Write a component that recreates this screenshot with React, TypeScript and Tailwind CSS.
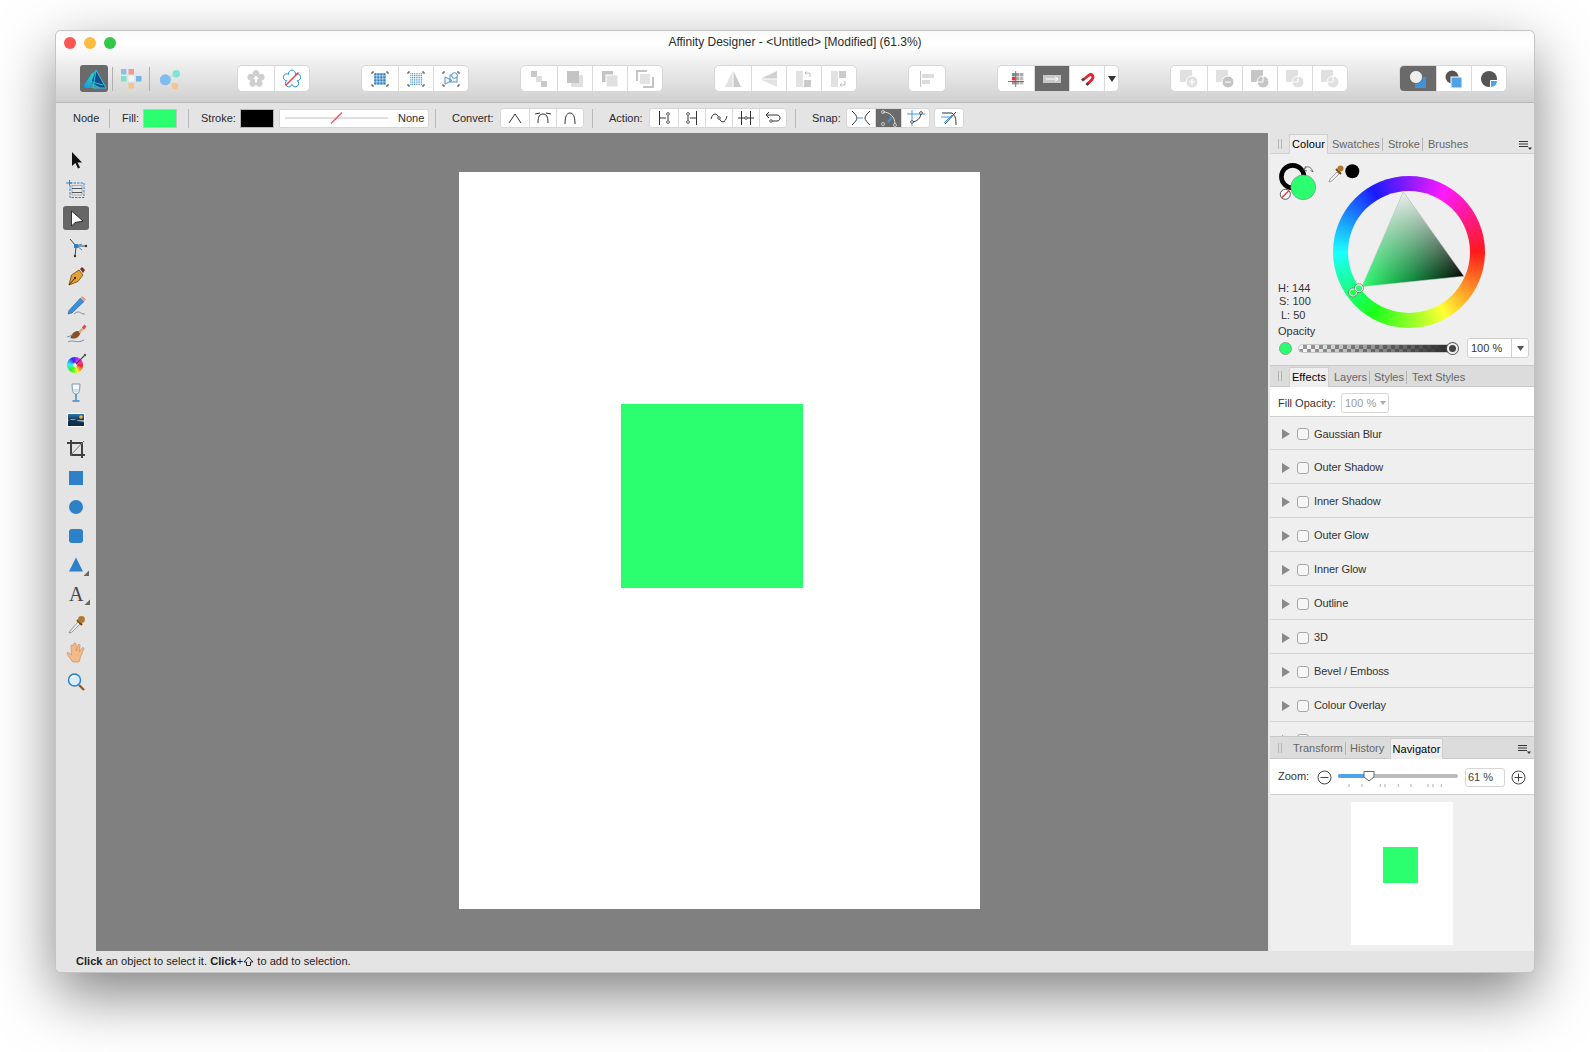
import React from "react";

const font = "font-['Liberation_Sans',Arial,sans-serif]";
const G = "#2bff70";

function flower(cx: number, cy: number, r: number, lobe: number) {
  const pts = [0, 1, 2, 3, 4].map((k) => {
    const a = ((-90 + 36 + 72 * k) * Math.PI) / 180;
    return [cx + r * Math.cos(a), cy + r * Math.sin(a)];
  });
  let d = `M${pts[4][0].toFixed(2)} ${pts[4][1].toFixed(2)}`;
  pts.forEach((p) => {
    d += ` A${lobe} ${lobe} 0 1 1 ${p[0].toFixed(2)} ${p[1].toFixed(2)}`;
  });
  return d + "Z";
}

function Svg({ w = 22, h = 22, children }: { w?: number; h?: number; children?: React.ReactNode }) {
  return (
    <svg width={w} height={h} viewBox={`0 0 ${w} ${h}`} className="block shrink-0" fill="none">
      {children}
    </svg>
  );
}

function Cell({ w, dark, children }: { w: string; dark?: boolean; children?: React.ReactNode }) {
  return (
    <div className={`${w} ${dark ? "bg-[#6a6a6a]" : ""} flex items-center justify-center border-l border-[#dadada] first:border-l-0`}>
      {children}
    </div>
  );
}

function Group({ ml, small, children }: { ml: string; small?: boolean; children?: React.ReactNode }) {
  return (
    <div className={`${ml} ${small ? "h-[20px] rounded-[3px]" : "h-[27px] rounded-[5px]"} flex overflow-hidden border border-[#d6d6d6] bg-white`}>
      {children}
    </div>
  );
}

function Corners({ c = "#444" }: { c?: string }) {
  return (
    <path d="M2 4V2H4M16 2H18V4M18 14V16H16M4 16H2V14" stroke={c} strokeWidth="1" />
  );
}

function Dots({ step, size, x0, n }: { step: number; size: number; x0: number; n: number }) {
  const a = Array.from({ length: n }, (_, i) => i);
  return (
    <>
      {a.flatMap((i) =>
        a.map((j) => (
          <rect key={`${i}-${j}`} x={x0 + i * step} y={x0 - 1 + j * step} width={size} height={size} fill="#2a7fc4" />
        ))
      )}
    </>
  );
}

function Boolean1({ kind }: { kind: number }) {
  return (
    <Svg w={20} h={20}>
      <rect x="1" y="1" width="12" height="12" fill={kind === 2 ? "#c6c6c6" : "#e0e0e0"} />
      <circle cx="13" cy="13" r="6" fill={kind === 1 ? "#c4c4c4" : kind === 2 ? "#c6c6c6" : "#e0e0e0"} stroke="#fff" strokeWidth="1" />
      {kind === 0 && <path d="M10 13h6M13 10v6" stroke="#fff" strokeWidth="1.2" />}
      {kind === 1 && <path d="M10 13h6" stroke="#fff" strokeWidth="1.2" />}
      {kind >= 2 && <path d="M13 7v6H7" stroke="#fff" strokeWidth="1" />}
    </Svg>
  );
}

function Toolbar() {
  return (
    <div className="flex items-center">
      <div className="ml-[24px] flex h-[27px] w-[28px] items-center justify-center rounded-[3px] bg-[#6a6a6a]">
        <Svg w={26} h={26}>
          <defs>
            <linearGradient id="lg" x1="3" y1="22" x2="24" y2="6" gradientUnits="userSpaceOnUse">
              <stop offset="0" stopColor="#1b8fe8" />
              <stop offset="0.55" stopColor="#2fd1c0" />
              <stop offset="1" stopColor="#1c5fa8" />
            </linearGradient>
          </defs>
          <path d="M15 4L25 22H5C2.5 22 1.7 20 3 18.5L11 7Z" fill="#134b86" />
          <path d="M11 7L15 4L8 22H5C2.5 22 1.7 20 3 18.5Z" fill="url(#lg)" />
          <path d="M15 4L25 22H12Z M8 15L22 19" stroke="#27c6ef" strokeWidth="1" />
          <path d="M10 16L20 22H8Z" fill="#39c7b8" opacity=".7" />
        </Svg>
      </div>
      <div className="ml-[4px] h-[24px] w-px bg-[#b0b0b0]" />
      <div className="ml-[5px] flex w-[26px] justify-center">
        <Svg w={24} h={24}>
          <rect x="2" y="2" width="5.5" height="5.5" fill="#8fbfe2" />
          <rect x="9.5" y="2" width="5.5" height="5.5" fill="#ec9a92" />
          <rect x="2" y="9" width="5.5" height="5.5" fill="#7ddfd0" />
          <rect x="9.5" y="9" width="5.5" height="5.5" fill="#f4f4f4" />
          <rect x="17" y="9" width="5.5" height="5.5" fill="#6fb4ea" />
          <rect x="9.5" y="16" width="5.5" height="5.5" fill="#f6c488" />
        </Svg>
      </div>
      <div className="ml-[5px] h-[24px] w-px bg-[#b0b0b0]" />
      <div className="ml-[6px] flex w-[26px] justify-center">
        <Svg w={24} h={24}>
          <path d="M8 13L19 7M8 13L18 19" stroke="#cdd" strokeWidth="1.5" />
          <circle cx="8.3" cy="12.8" r="5.5" fill="#7dbdf0" />
          <circle cx="19.3" cy="6.8" r="3.7" fill="#7de6d2" />
          <circle cx="18" cy="19.2" r="3.3" fill="#f6c28e" />
        </Svg>
      </div>

      <Group ml="ml-[55px]">
        <Cell w="w-[36px]">
          <Svg w={20} h={20}>
            <path d={flower(10, 10, 5.5, 3.4)} fill="#cfcfcf" />
            <path d="M10 6.5L13 10H11V13.5H9V10H7Z" fill="#fff" />
          </Svg>
        </Cell>
        <Cell w="w-[35px]">
          <Svg w={20} h={20}>
            <path d={flower(10, 10, 5.5, 3.4)} fill="#fff" stroke="#2a8bd6" strokeWidth="1" />
            <path d="M3.5 16.5L16.5 3.5" stroke="#e8414f" strokeWidth="1.4" />
          </Svg>
        </Cell>
      </Group>

      <Group ml="ml-[51px]">
        <Cell w="w-[36px]">
          <Svg w={20} h={18}>
            <Corners />
            <Dots step={3} size={2.4} x0={4.2} n={4} />
          </Svg>
        </Cell>
        <Cell w="w-[35px]">
          <Svg w={20} h={18}>
            <Corners />
            <Dots step={1.8} size={1} x0={4.3} n={7} />
          </Svg>
        </Cell>
        <Cell w="w-[35px]">
          <Svg w={20} h={18}>
            <Corners />
            <rect x="9" y="5" width="7" height="7" stroke="#4a90cc" />
            <circle cx="13.5" cy="5.5" r="2.8" stroke="#4a90cc" fill="#fff" />
            <path d="M4 7V14L11 10.5Z" stroke="#4a90cc" />
          </Svg>
        </Cell>
      </Group>

      <Group ml="ml-[51px]">
        <Cell w="w-[36px]">
          <Svg w={18} h={18}>
            <rect x="1" y="1" width="6" height="6" fill="#c8c8c8" />
            <rect x="6" y="6" width="6" height="6" fill="#dedede" />
            <rect x="11" y="11" width="6" height="6" fill="#c8c8c8" />
          </Svg>
        </Cell>
        <Cell w="w-[35px]">
          <Svg w={18} h={18}>
            <rect x="5" y="5" width="12" height="12" fill="#e0e0e0" />
            <rect x="1" y="1" width="12" height="12" fill="#c4c4c4" />
          </Svg>
        </Cell>
        <Cell w="w-[35px]">
          <Svg w={18} h={18}>
            <rect x="1" y="1" width="11" height="11" fill="#c4c4c4" />
            <rect x="5" y="5" width="12" height="12" fill="#e0e0e0" stroke="#fff" />
          </Svg>
        </Cell>
        <Cell w="w-[35px]">
          <Svg w={18} h={18}>
            <path d="M1 11V1H11" stroke="#c4c4c4" strokeWidth="2" />
            <rect x="4" y="4" width="10" height="10" fill="#e4e4e4" />
            <path d="M7 17H17V7" stroke="#c4c4c4" strokeWidth="2" />
          </Svg>
        </Cell>
      </Group>

      <Group ml="ml-[51px]">
        <Cell w="w-[36px]">
          <Svg w={20} h={20}>
            <path d="M9.5 2V18H2Z" fill="#e2e2e2" />
            <path d="M10.5 2V18H18Z" fill="#cacaca" />
          </Svg>
        </Cell>
        <Cell w="w-[35px]">
          <Svg w={20} h={20}>
            <path d="M18 2V9.5H2Z" fill="#d0d0d0" />
            <path d="M18 18V10.5H2Z" fill="#e2e2e2" />
          </Svg>
        </Cell>
        <Cell w="w-[35px]">
          <Svg w={20} h={20}>
            <rect x="2" y="2" width="7" height="16" fill="#e2e2e2" />
            <rect x="10" y="11" width="7" height="7" fill="#cacaca" />
            <path d="M16 8V4H11M12.5 2.5L11 4L12.5 5.5" stroke="#bbb" />
          </Svg>
        </Cell>
        <Cell w="w-[35px]">
          <Svg w={20} h={20}>
            <rect x="2" y="2" width="7" height="16" fill="#e2e2e2" />
            <rect x="10" y="2" width="7" height="7" fill="#cacaca" />
            <path d="M16 12V16H11M12.5 14.5L11 16L12.5 17.5" stroke="#bbb" />
          </Svg>
        </Cell>
      </Group>

      <Group ml="ml-[51px]">
        <Cell w="w-[36px]">
          <Svg w={20} h={20}>
            <path d="M3.5 2V18" stroke="#c4c4c4" />
            <rect x="5" y="5" width="12" height="4" fill="#dcdcdc" />
            <rect x="5" y="11" width="8" height="4" fill="#dcdcdc" />
          </Svg>
        </Cell>
      </Group>

      <Group ml="ml-[51px]">
        <Cell w="w-[36px]">
          <Svg w={18} h={18}>
            <rect x="5" y="3" width="3.4" height="3.4" fill="#8a8a8a" />
            <rect x="9" y="3" width="3.4" height="3.4" fill="#9a9a9a" />
            <rect x="13" y="3" width="3.4" height="3.4" fill="#aaa" />
            <rect x="5" y="7" width="3.4" height="3.4" fill="#ea2f2f" />
            <rect x="9" y="7" width="3.4" height="3.4" fill="#aaa" />
            <rect x="13" y="7" width="3.4" height="3.4" fill="#bbb" />
            <rect x="5" y="11" width="3.4" height="3.4" fill="#9a9a9a" />
            <rect x="9" y="11" width="3.4" height="3.4" fill="#aaa" />
            <rect x="13" y="11" width="3.4" height="3.4" fill="#bbb" />
            <path d="M1 11.5H17M8.7 1V17" stroke="#555" strokeWidth=".8" />
          </Svg>
        </Cell>
        <Cell w="w-[35px]" dark>
          <Svg w={20} h={16}>
            <rect x="1" y="4" width="18" height="8" fill="#c9c9c9" />
            <path d="M4 8H16M13 5.5L16 8L13 10.5" stroke="#fff" />
          </Svg>
        </Cell>
        <Cell w="w-[35px]">
          <Svg w={20} h={20}>
            <path d="M6.5 10.5L11.5 6.5C14.5 4 17.5 7 15 10.5L10.5 15" stroke="#e4262c" strokeWidth="2.8" />
            <path d="M5 11.5L7 9.8M9.5 16L11.3 14" stroke="#444" strokeWidth="2.8" />
          </Svg>
        </Cell>
        <Cell w="w-[14px]">
          <Svg w={8} h={6}>
            <path d="M0 0H8L4 6Z" fill="#333" />
          </Svg>
        </Cell>
      </Group>

      <Group ml="ml-[51px]">
        <Cell w="w-[36px]"><Boolean1 kind={0} /></Cell>
        <Cell w="w-[35px]"><Boolean1 kind={1} /></Cell>
        <Cell w="w-[35px]"><Boolean1 kind={2} /></Cell>
        <Cell w="w-[35px]"><Boolean1 kind={3} /></Cell>
        <Cell w="w-[35px]"><Boolean1 kind={4} /></Cell>
      </Group>

      <Group ml="ml-[51px]">
        <Cell w="w-[36px]" dark>
          <Svg w={20} h={20}>
            <rect x="7" y="8" width="11" height="11" fill="#3f93d9" />
            <circle cx="8" cy="8" r="6.5" fill="#eee" stroke="#444" strokeWidth=".6" />
          </Svg>
        </Cell>
        <Cell w="w-[35px]">
          <Svg w={20} h={20}>
            <circle cx="8" cy="8" r="6.5" fill="#555" />
            <rect x="7" y="8" width="11" height="11" fill="#4ea3e6" stroke="#fff" />
          </Svg>
        </Cell>
        <Cell w="w-[35px]">
          <Svg w={20} h={20}>
            <circle cx="10" cy="10" r="8" fill="#555" />
            <path d="M11.5 18.5V11.5H18.5C18.5 15.5 15.5 18.5 11.5 18.5Z" fill="#4ea3e6" stroke="#fff" />
          </Svg>
        </Cell>
      </Group>
    </div>
  );
}

function Lbl({ cls, children }: { cls: string; children: React.ReactNode }) {
  return <div className={`${cls} shrink-0 whitespace-nowrap text-[11px] leading-none text-[#2a2a2a]`}>{children}</div>;
}

function Sep({ ml }: { ml?: string }) {
  return <div className={`${ml ?? ""} h-[19px] w-px shrink-0 bg-[#b8b8b8]`} />;
}

function ContextBar() {
  const s = "#333";
  return (
    <div className="flex h-[30px] shrink-0 items-center bg-[#e4e4e4]">
      <Lbl cls="ml-[17px] w-[36px]">Node</Lbl>
      <Sep />
      <Lbl cls="ml-[12px] w-[21px]">Fill:</Lbl>
      <div className="h-[19px] w-[34px] border border-[#c4c4c4] bg-[#2bff70]" />
      <Sep ml="ml-[11px]" />
      <Lbl cls="ml-[12px] w-[39px]">Stroke:</Lbl>
      <div className="h-[19px] w-[34px] border border-[#b4b4b4] bg-black" />
      <div className="ml-[5px] flex h-[19px] w-[150px] items-center rounded-[2px] border border-[#d6d6d6] bg-white pl-[5px]">
        <Svg w={104} h={14}>
          <path d="M0 7H103" stroke="#d4d4d4" strokeWidth="1.5" />
          <path d="M46 12.5L57 1.5" stroke="#f0566a" strokeWidth="1.4" />
        </Svg>
        <span className="ml-[9px] text-[11px] leading-none text-[#2a2a2a]">None</span>
      </div>
      <Sep ml="ml-[6px]" />
      <Lbl cls="ml-[16px] w-[48px]">Convert:</Lbl>
      <Group ml="" small>
        <Cell w="w-[28px]">
          <Svg w={16} h={14}><path d="M2 12L8 3L14 12" stroke={s} /></Svg>
        </Cell>
        <Cell w="w-[27px]">
          <Svg w={16} h={14}>
            <path d="M3 12C3 5 5 3 8 3C11 3 13 5 13 12" stroke={s} />
            <path d="M0 3L5 2M11 2L16 3" stroke={s} />
          </Svg>
        </Cell>
        <Cell w="w-[27px]">
          <Svg w={16} h={14}><path d="M3 13C3 5 5 2 8 2C11 2 13 5 13 13" stroke={s} /></Svg>
        </Cell>
      </Group>
      <Sep ml="ml-[8px]" />
      <Lbl cls="ml-[16px] w-[40px]">Action:</Lbl>
      <Group ml="" small>
        <Cell w="w-[28px]">
          <Svg w={18} h={16}>
            <path d="M4.5 1V15M5 8H11" stroke={s} />
            <circle cx="13" cy="4" r="1.4" stroke={s} strokeWidth=".8" />
            <circle cx="13" cy="12" r="1.4" stroke={s} strokeWidth=".8" />
            <path d="M13 6V10" stroke={s} />
          </Svg>
        </Cell>
        <Cell w="w-[27px]">
          <Svg w={18} h={16}>
            <path d="M13.5 1V15M13 8H7" stroke={s} />
            <circle cx="5" cy="4" r="1.4" stroke={s} strokeWidth=".8" />
            <circle cx="5" cy="12" r="1.4" stroke={s} strokeWidth=".8" />
            <path d="M5 6V10" stroke={s} />
          </Svg>
        </Cell>
        <Cell w="w-[27px]">
          <Svg w={18} h={16}>
            <path d="M1 9C3 2 7 3 9 8C11 13 15 14 17 6" stroke={s} />
            <circle cx="9" cy="8" r="1.3" fill="#fff" stroke={s} strokeWidth=".8" />
          </Svg>
        </Cell>
        <Cell w="w-[27px]">
          <Svg w={18} h={16}>
            <path d="M4.5 1V15M13.5 1V15M1 8H17" stroke={s} />
            <circle cx="9" cy="8" r="1.3" fill="#fff" stroke={s} strokeWidth=".8" />
          </Svg>
        </Cell>
        <Cell w="w-[27px]">
          <Svg w={18} h={16}>
            <path d="M2 5H13C17 5 17 11 13 11H8" stroke={s} />
            <path d="M5 2L2 5L5 8" stroke={s} />
            <circle cx="7" cy="11" r="1.3" fill="#fff" stroke={s} strokeWidth=".8" />
          </Svg>
        </Cell>
      </Group>
      <Sep ml="ml-[8px]" />
      <Lbl cls="ml-[16px] w-[34px]">Snap:</Lbl>
      <Group ml="" small>
        <Cell w="w-[28px]">
          <Svg w={22} h={16}>
            <path d="M2 1C5 4 7 6 7 8C7 10 5 12 2 15M20 1C17 4 15 6 15 8C15 10 17 12 20 15" stroke={s} />
            <path d="M8 8H13" stroke="#3f9be0" />
          </Svg>
        </Cell>
        <Cell w="w-[26px]" dark>
          <Svg w={20} h={18}>
            <path d="M4 3C11 3 16 8 16 15" stroke="#ddd" />
            <circle cx="4" cy="3" r="1.5" stroke="#ddd" strokeWidth=".8" />
            <circle cx="16" cy="16" r="1.5" stroke="#ddd" strokeWidth=".8" />
            <circle cx="4" cy="15" r="1.5" stroke="#ddd" strokeWidth=".8" />
            <path d="M9 13L13 8" stroke="#3f9be0" strokeWidth="2" />
          </Svg>
        </Cell>
        <Cell w="w-[28px]">
          <Svg w={20} h={18}>
            <path d="M6 1V17M1 5H19" stroke="#3f9be0" />
            <path d="M5 13C11 13 15 9 15 4" stroke={s} />
            <circle cx="6" cy="13" r="1.4" fill="#fff" stroke={s} strokeWidth=".8" />
            <circle cx="15" cy="4" r="1.4" fill="#fff" stroke={s} strokeWidth=".8" />
          </Svg>
        </Cell>
      </Group>
      <Group ml="ml-[4px]" small>
        <Cell w="w-[28px]">
          <Svg w={20} h={18}>
            <path d="M3 4H13C17 7 17 11 17 16" stroke={s} />
            <path d="M6 15L17 3" stroke={s} />
            <path d="M2 8L13 8M5 14L13 6" stroke="#3f9be0" />
          </Svg>
        </Cell>
      </Group>
    </div>
  );
}

function wheelSectors(cx: number, cy: number, r: number) {
  return Array.from({ length: 24 }, (_, i) => {
    const a0 = (i * 15 * Math.PI) / 180;
    const a1 = ((i + 1.2) * 15 * Math.PI) / 180;
    return {
      d: `M${cx} ${cy}L${(cx + r * Math.cos(a0)).toFixed(2)} ${(cy + r * Math.sin(a0)).toFixed(2)}A${r} ${r} 0 0 1 ${(cx + r * Math.cos(a1)).toFixed(2)} ${(cy + r * Math.sin(a1)).toFixed(2)}Z`,
      c: `hsl(${i * 15} 90% 55%)`,
    };
  });
}

const MiniTri = () => <path d="M21.5 23H27V17.5Z" fill="#666" />;

const toolIcons: React.ReactNode[] = [
  <Svg w={28} h={24} key="0"><path d="M10 4V18L13.4 15L16 20.5L18 19.5L15.5 14.5H20Z" fill="#111" /></Svg>,
  <Svg w={28} h={24} key="1">
    <rect x="8" y="6" width="14" height="14.5" stroke="#2a86d0" strokeDasharray="2.5 1" />
    <path d="M4 6H10M7.5 3V8" stroke="#2a86d0" />
    <rect x="10" y="8.5" width="10" height="9.5" fill="#e8e8e8" stroke="#888" strokeWidth=".6" />
    <path d="M10 11.5H20M10 15.5H20" stroke="#555" />
  </Svg>,
  <Svg w={28} h={24} key="2"><path d="M9.5 5V20L13 16.5L21 15Z" fill="#fff" stroke="#111" strokeWidth=".8" /></Svg>,
  <Svg w={28} h={24} key="3">
    <path d="M15 11H24M8 4L14 11M14 12L13 21" stroke="#444" />
    <path d="M15 11L20 15M14 11L20 9" stroke="#3a8fd4" />
    <rect x="12" y="9" width="4" height="4" fill="#2f7fc4" />
    <circle cx="24" cy="11" r="1.2" fill="#333" /><circle cx="13" cy="21" r="1.2" fill="#333" />
  </Svg>,
  <Svg w={28} h={24} key="4">
    <path d="M7 21L9.5 11L17 6L21 11L16 17.5Z" fill="#e6a133" stroke="#6b4510" strokeWidth=".8" />
    <path d="M7 21L13 14" stroke="#4a2d08" />
    <circle cx="13" cy="14" r="1.2" fill="#4a2d08" />
    <path d="M18 5L20 3L23 6L21 9Z" fill="#7c2b22" />
  </Svg>,
  <Svg w={28} h={24} key="5">
    <path d="M7 17.5L18.5 5L22 8.5L10 20L6 21Z" fill="#3a8fdc" stroke="#1f5d9a" strokeWidth=".6" />
    <path d="M18.5 5L20.5 3L24 6.5L22 8.5Z" fill="#f09a96" />
    <path d="M12 21C15 18 18 19 19 20C20 21 22 21 23 21" stroke="#777" strokeWidth=".8" />
  </Svg>,
  <Svg w={28} h={24} key="6">
    <path d="M8.5 16C9.5 10 15 8 18.5 9.5C18.5 14.5 13.5 18 8.5 16Z" fill="#8a4f22" />
    <path d="M17 10.5L22 5.5" stroke="#d9a87a" strokeWidth="2.4" />
    <path d="M21 6.5L23.5 3.5" stroke="#e04a55" strokeWidth="2.8" />
    <path d="M5 15L11 13M6 20C11 17 15 22 22 18" stroke="#4f8fc4" strokeWidth=".9" />
  </Svg>,
  <Svg w={28} h={24} key="7">
    {wheelSectors(13, 14, 8).map((p, i) => <path key={i} d={p.d} fill={p.c} />)}
    <circle cx="13" cy="14" r="2" fill="#eee" />
    <path d="M14 13L23 4" stroke="#444" strokeWidth="1.1" />
    <circle cx="23" cy="4" r="1.2" fill="#555" />
  </Svg>,
  <Svg w={28} h={24} key="8">
    <path d="M10 4H18L17.6 10C17.4 13 15.5 14 14 14C12.5 14 10.6 13 10.4 10Z" fill="#f4f8fb" stroke="#7d98ad" />
    <path d="M14 14V20M10.5 21H17.5" stroke="#3b86c4" strokeWidth="1.4" />
    <rect x="10.8" y="9" width="6.4" height="3" fill="#cfdfe9" />
  </Svg>,
  <Svg w={28} h={24} key="9">
    <defs>
      <linearGradient id="ph" x1="0" y1="0" x2="0" y2="1">
        <stop offset="0" stopColor="#2f7fb8" />
        <stop offset=".5" stopColor="#15344f" />
        <stop offset="1" stopColor="#0e2a45" />
      </linearGradient>
    </defs>
    <rect x="5.5" y="5.5" width="17" height="13" fill="url(#ph)" stroke="#fff" />
    <circle cx="19" cy="9" r="1.8" fill="#efb33e" />
    <path d="M6 13C10 10 13 11 16 13L22 14V12H6Z" fill="#cfe4f2" opacity=".7" />
  </Svg>,
  <Svg w={28} h={24} key="10">
    <path d="M9 3V18H23M5 6H20V21" stroke="#3f3f3f" strokeWidth="2" />
    <path d="M8 19L22 4" stroke="#777" />
  </Svg>,
  <Svg w={28} h={24} key="11"><rect x="7" y="5" width="14" height="14" fill="#2e80c8" /></Svg>,
  <Svg w={28} h={24} key="12"><circle cx="14" cy="12" r="7" fill="#2e80c8" /></Svg>,
  <Svg w={28} h={24} key="13"><rect x="7" y="5" width="14" height="14" rx="3" fill="#2e80c8" /></Svg>,
  <Svg w={28} h={24} key="14"><path d="M14 4.5L21 18.5H7Z" fill="#2e80c8" /><MiniTri /></Svg>,
  <div className="relative h-[24px] w-[28px]" key="15">
    <span className="absolute left-[6px] top-[1px] font-['Liberation_Serif',serif] text-[20px] leading-[22px] text-[#444]">A</span>
    <div className="absolute left-0 top-0"><Svg w={28} h={24}><MiniTri /></Svg></div>
  </div>,
  <Svg w={28} h={24} key="16">
    <path d="M8 20L16 11L18 13L10 21L7 22Z" fill="#eee" stroke="#777" strokeWidth=".7" />
    <path d="M15 9L20 14" stroke="#6a4310" strokeWidth="2" />
    <circle cx="19.5" cy="8.5" r="3.4" fill="#b07a2c" />
  </Svg>,
  <Svg w={28} h={24} key="17">
    <path d="M10 21C8 18 5 15 5 13C6 12 8 13 9.5 15L9 6C9 4.5 11 4.5 11 6L11.8 4C12 2.5 14 2.5 14 4L14.5 11L16 5C16.5 3.5 18 4 18 5.5L17.3 12L20 8C21 7 22.3 8 21.7 9.3L18.5 17C18 19 17.5 21 17 22H11Z" fill="#f4b98a" stroke="#c98552" strokeWidth=".6" />
  </Svg>,
  <Svg w={28} h={24} key="18">
    <path d="M17 16L22 21" stroke="#9a5a24" strokeWidth="2.4" />
    <circle cx="12.5" cy="11" r="6" fill="#d9eefc" stroke="#2b7fc6" strokeWidth="1.4" />
    <path d="M9 9C10 7.5 12 7 13 7" stroke="#fff" strokeWidth="1.4" />
  </Svg>,
];

function Tools() {
  return (
    <div className="flex w-[40px] shrink-0 flex-col items-center bg-[#e4e4e4] pt-[15px]">
      {toolIcons.map((ic, i) => (
        <div key={i} className={`flex h-[24px] w-[26px] items-center justify-center rounded-[3px] ${i === 0 ? "" : "mt-[4.95px]"} ${i === 2 ? "bg-[#666666]" : ""}`}>
          {ic}
        </div>
      ))}
    </div>
  );
}

function Grip() {
  return <div className="ml-[8px] h-[10px] w-[4px] shrink-0 border-x border-[#b4b4b4]" />;
}

function Burger() {
  return (
    <Svg w={13} h={10}>
      <path d="M0 1.5H9M0 4H9M0 6.5H9" stroke="#333" />
      <path d="M9 7.5H13L11 10Z" fill="#333" />
    </Svg>
  );
}

function Tab({ children, cls }: { children: React.ReactNode; cls: string }) {
  return (
    <div className={`${cls} flex items-center justify-center self-end border-x border-t border-[#cfcfcf] bg-[#efefef] text-[11px] leading-none tracking-[0.1px] text-black`}>
      {children}
    </div>
  );
}

function TabText({ cls, sep, children }: { cls: string; sep?: boolean; children: React.ReactNode }) {
  return (
    <div className={`${cls} ${sep ? "border-r border-[#b4b4b4]" : ""} flex h-[13px] items-center text-[11px] leading-none text-[#666] whitespace-nowrap`}>
      {children}
    </div>
  );
}

function ColourPanel() {
  return (
    <div className="h-[211px] bg-[#efefef]">
      <div className="flex h-[171px]">
        <div className="relative w-[63px] shrink-0">
          <div className="absolute left-[8px] top-[5px]">
            <Svg w={92} h={52}>
              <circle cx="14.7" cy="17.7" r="11.3" stroke="#000" strokeWidth="4.6" />
              <circle cx="25.3" cy="28.3" r="12.4" fill={G} stroke="#8a8a8a" strokeWidth=".7" />
              <circle cx="7.3" cy="35.3" r="5" fill="#fff" stroke="#333" strokeWidth=".8" />
              <path d="M3.5 39L11 31.5" stroke="#ea2f3a" strokeWidth="1.2" />
              <path d="M26 11C28.5 6 33 7 35 13M28 7L25.7 10.8L29 12M35.3 13L32.5 11.3" stroke="#555" strokeWidth=".8" />
              <path d="M52 20L59 13L61 15L54 22L51 23Z" fill="#eee" stroke="#777" strokeWidth=".6" />
              <path d="M58 10L63 15" stroke="#6a4310" strokeWidth="1.8" />
              <circle cx="62.5" cy="9.5" r="3" fill="#b07a2c" />
              <circle cx="74.3" cy="12.3" r="7" fill="#000" />
            </Svg>
          </div>
          <div className="pl-[8px] pt-[128px] text-[11px] leading-[13.3px] text-[#333]">
            <div>H: 144</div>
            <div className="pl-px">S: 100</div>
            <div className="pl-[3px]">L: 50</div>
          </div>
        </div>
        <div className="relative mt-[22px] flex h-[152px] w-[152px] items-center justify-center rounded-full bg-[conic-gradient(from_90deg,#ff1a1a,#ffff33,#1aff1a,#1affff,#1a1aff,#ff1aff,#ff1a1a)]">
          <div className="h-[122px] w-[122px] rounded-full bg-[#efefef]" />
          <div className="absolute inset-0">
            <svg width="152" height="152" viewBox="0 0 152 152" className="block">
              <defs>
                <linearGradient id="tb" x1="28.7" y1="110.8" x2="131" y2="100.2" gradientUnits="userSpaceOnUse">
                  <stop offset="0" stopColor="#2bff70" />
                  <stop offset="0.5" stopColor="#0f8a3c" />
                  <stop offset="1" stopColor="#050505" />
                </linearGradient>
                <linearGradient id="tw" x1="70.3" y1="15.8" x2="80" y2="105.5" gradientUnits="userSpaceOnUse">
                  <stop offset="0" stopColor="#eeeeee" stopOpacity="1" />
                  <stop offset="1" stopColor="#eeeeee" stopOpacity="0" />
                </linearGradient>
              </defs>
              <path d="M70.3 15.8L131 100.2L28.7 110.8Z" fill="url(#tb)" />
              <path d="M70.3 15.8L131 100.2L28.7 110.8Z" fill="url(#tw)" stroke="#cfcfcf" strokeWidth=".5" />
              <circle cx="20" cy="116.5" r="4.4" fill="#fff" stroke="#333" strokeWidth=".5" />
              <circle cx="20" cy="116.5" r="3" fill="#2bff4a" />
              <circle cx="26" cy="112.2" r="4.4" fill="#fff" stroke="#333" strokeWidth=".5" />
              <circle cx="26" cy="112.2" r="3" fill="#2bff70" />
            </svg>
          </div>
        </div>
      </div>
      <div className="h-[13px] pl-[8px] text-[11px] leading-[13px] text-[#333]">Opacity</div>
      <div className="flex h-[20px] items-center">
        <div className="ml-[9px] h-[13px] w-[13px] rounded-full border border-[#9a9a9a] bg-[#2bff70]" />
        <div className="relative ml-[6px] flex h-[9px] w-[160px] rounded-full border border-[#c4c4c4] [background:linear-gradient(90deg,rgba(0,0,0,0),#333_92%),repeating-conic-gradient(#9c9c9c_0_25%,#fff_0_50%)_0_0/8px_8px]">
          <div className="absolute right-[-1px] top-[-2px] h-[11px] w-[11px] rounded-full border-[2px] border-[#f2f2f2] bg-[#444] shadow-[0_0_0_1px_#555]" />
        </div>
        <div className="ml-[9px] flex h-[20px] w-[62px] rounded-[3px] border border-[#d0d0d0] bg-white text-[11px] leading-none text-[#333]">
          <div className="flex w-[44px] items-center border-r border-[#d0d0d0] pl-[3px]">100 %</div>
          <div className="flex flex-1 items-center justify-center">
            <Svg w={7} h={5}><path d="M0 0H7L3.5 5Z" fill="#555" /></Svg>
          </div>
        </div>
      </div>
    </div>
  );
}

const effects = ["Gaussian Blur", "Outer Shadow", "Inner Shadow", "Outer Glow", "Inner Glow", "Outline", "3D", "Bevel / Emboss", "Colour Overlay", ""];

function Effects() {
  return (
    <div className="flex h-[371px] flex-col">
      <div className="flex h-[22px] shrink-0 items-center bg-[#dcdcdc] shadow-[inset_0_1px_0_#c8c8c8,inset_0_-1px_0_#c8c8c8]">
        <Grip />
        <Tab cls="ml-[7px] h-[20px] w-[40px]">Effects</Tab>
        <TabText cls="ml-[5px] mt-[2px] w-[36px]" sep>Layers</TabText>
        <TabText cls="ml-[4px] mt-[2px] w-[33px]" sep>Styles</TabText>
        <TabText cls="ml-[5px] mt-[2px] w-[60px]">Text Styles</TabText>
      </div>
      <div className="flex h-[30px] shrink-0 items-center border-b border-[#cfcfcf] bg-white pt-[3px]">
        <div className="ml-[8px] mt-px w-[63px] text-[11px] leading-none text-[#333]">Fill Opacity:</div>
        <div className="flex h-[20px] w-[48px] items-center rounded-[3px] border border-[#d6d6d6] pl-[3px] text-[11px] leading-none text-[#9a9a9a]">
          <span className="w-[35px]">100 %</span>
          <Svg w={6} h={4}><path d="M0 0H6L3 4Z" fill="#aaa" /></Svg>
        </div>
      </div>
      <div className="min-h-0 flex-1 overflow-hidden bg-[#efefef]">
        {effects.map((e, i) => (
          <div key={i} className={`flex ${i === 0 ? "h-[33px]" : "h-[34px]"} items-center border-b border-[#d4d4d4] pl-[12px] pt-[2px]`}>
            <Svg w={8} h={10}><path d="M0 0L8 5L0 10Z" fill="#8a8a8a" /></Svg>
            <div className="ml-[7px] h-[12px] w-[12px] rounded-[3px] border border-[#a8a8a8] bg-[#f6f6f6]" />
            {e && <span className="ml-[5px] text-[11px] leading-none tracking-[-0.1px] text-[#333]">{e}</span>}
          </div>
        ))}
      </div>
    </div>
  );
}

function Navigator() {
  const ticks = [298, 337, 392, 406, 446, 484, 535, 550, 575];
  return (
    <div className="flex min-h-0 flex-1 flex-col">
      <div className="flex h-[23px] shrink-0 items-center bg-[#dcdcdc] shadow-[inset_0_1px_0_#c8c8c8,inset_0_-1px_0_#c8c8c8]">
        <Grip />
        <TabText cls="ml-[11px] mt-px w-[53px]" sep>Transform</TabText>
        <TabText cls="ml-[4px] mt-px w-[40px]">History</TabText>
        <Tab cls="h-[21px] w-[53px]">Navigator</Tab>
        <div className="ml-[75px] mt-[2px]"><Burger /></div>
      </div>
      <div className="flex h-[36px] shrink-0 items-center border-b border-[#cfcfcf] bg-white">
        <div className="ml-[8px] w-[39px] text-[11px] leading-none text-[#333]">Zoom:</div>
        <div className="mt-[2px]">
          <Svg w={15} h={15}>
            <circle cx="7.5" cy="7.5" r="6.5" stroke="#444" />
            <path d="M3.5 7.5H11.5" stroke="#444" />
          </Svg>
        </div>
        <div className="ml-[6px]">
          <Svg w={122} h={22}>
            <rect x="0" y="8" width="120" height="4" rx="2" fill="#bcbcbc" />
            <rect x="0" y="8" width="30" height="4" rx="2" fill="#4da3ea" />
            <path d="M26 5.5H36V11L31 15L26 11Z" fill="#fff" stroke="#666" />
            {ticks.map((t) => (
              <path key={t} d={`M${((t - 265) / 3).toFixed(1)} 18V21`} stroke="#b0b0b0" />
            ))}
          </Svg>
        </div>
        <div className="ml-[5px] mt-[2px] flex h-[19px] w-[40px] items-center rounded-[3px] border border-[#d6d6d6] pl-[2px] text-[11px] leading-none text-[#444]">61 %</div>
        <div className="ml-[6px] mt-[2px]">
          <Svg w={15} h={15}>
            <circle cx="7.5" cy="7.5" r="6.5" stroke="#444" />
            <path d="M3.5 7.5H11.5M7.5 3.5V11.5" stroke="#444" />
          </Svg>
        </div>
      </div>
      <div className="min-h-0 flex-1 bg-[#efefef] pl-[81px] pt-[7px]">
        <div className="h-[143px] w-[102px] bg-white pl-[32px] pt-[45px]">
          <div className="h-[36px] w-[35px] bg-[#2bff70]" />
        </div>
      </div>
    </div>
  );
}

function Panel() {
  return (
    <div className="flex w-[266px] shrink-0 flex-col border-l-2 border-[#e8e8e8]">
      <div className="flex h-[21px] shrink-0 items-center bg-[#e4e4e4] shadow-[inset_0_-1px_0_#cfcfcf]">
        <Grip />
        <Tab cls="ml-[7px] h-[20px] w-[39px]">Colour</Tab>
        <TabText cls="ml-[4px] mt-px w-[51px]" sep>Swatches</TabText>
        <TabText cls="ml-[5px] mt-px w-[35px]" sep>Stroke</TabText>
        <TabText cls="ml-[5px] mt-px w-[46px]">Brushes</TabText>
        <div className="ml-[45px] mt-[2px]"><Burger /></div>
      </div>
      <ColourPanel />
      <Effects />
      <Navigator />
    </div>
  );
}

export default function App() {
  return (
    <div className={`${font} h-[1052px] w-[1590px] overflow-hidden bg-white pl-[56px] pt-[31px]`}>
      <div className="flex h-[941px] w-[1478px] flex-col overflow-hidden rounded-[5px] shadow-[0_0_0_1px_#c4c4c4,0_22px_60px_rgba(0,0,0,0.5)]">
        <div className="h-[72px] shrink-0 border-b border-[#b8b8b8] bg-[linear-gradient(#fafafa,#ffffff_18%,#d0d0d0)]">
          <div className="relative flex h-[21px] items-center justify-center text-[12px] leading-none text-[#2a2a2a]">
            <div className="absolute left-[8px] top-[6px] flex gap-[8px]">
              <div className="h-[12px] w-[12px] rounded-full bg-[#fc5753]" />
              <div className="h-[12px] w-[12px] rounded-full bg-[#fdbc40]" />
              <div className="h-[12px] w-[12px] rounded-full bg-[#33c748]" />
            </div>
            <span>Affinity Designer - &lt;Untitled&gt; [Modified] (61.3%)</span>
          </div>
          <div className="pt-[13px]"><Toolbar /></div>
        </div>
        <ContextBar />
        <div className="flex h-[818px] shrink-0">
          <Tools />
          <div className="min-w-0 flex-1 bg-[#808080] pl-[363px] pt-[39px]">
            <div className="h-[737px] w-[521px] bg-white pl-[162px] pt-[232px]">
              <div className="h-[184px] w-[182px] bg-[#2bff70]" />
            </div>
          </div>
          <Panel />
        </div>
        <div className="flex h-[21px] shrink-0 items-center bg-[#e4e4e4] pl-[20px] text-[11px] leading-none tracking-[0.05px] text-[#222]">
          <b>Click</b>
          <span className="whitespace-pre"> an object to select it. </span>
          <b>Click</b>
          <span>+</span>
          <Svg w={11} h={11}><path d="M5.5 1L10 6H7.5V9.5H3.5V6H1Z" stroke="#222" strokeWidth="1" /></Svg>
          <span className="whitespace-pre"> to add to selection.</span>
        </div>
      </div>
    </div>
  );
}
